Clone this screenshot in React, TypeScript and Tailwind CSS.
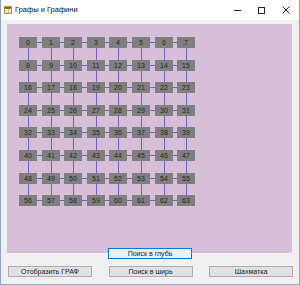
import React from "react";

const COLS = 8;
const ROWS = 8;
const STEP = 22.6;
const NODE_W = 18;
const NODE_H = 11;
const OFF_X = 12;
const OFF_Y = 13;

const pos = (i: number, off: number) => off + Math.round(STEP * i);

function Graph() {
  const nodes = [];
  for (let r = 0; r < ROWS; r++) {
    for (let c = 0; c < COLS; c++) {
      nodes.push({ id: r * COLS + c, x: pos(c, OFF_X), y: pos(r, OFF_Y) });
    }
  }

  return (
    <div className="relative h-full w-full">
      {/* edges */}
      <svg className="absolute inset-0" width="285" height="229">
        {Array.from({ length: ROWS }).map((_, r) => (
          <line
            key={"h" + r}
            x1={pos(0, OFF_X) + NODE_W / 2}
            x2={pos(COLS - 1, OFF_X) + NODE_W / 2}
            y1={pos(r, OFF_Y) + 5.5}
            y2={pos(r, OFF_Y) + 5.5}
            stroke="#7160c8"
            strokeWidth="1"
          />
        ))}
        {Array.from({ length: COLS }).map((_, c) => (
          <line
            key={"v" + c}
            x1={pos(c, OFF_X) + 9.5}
            x2={pos(c, OFF_X) + 9.5}
            y1={pos(0, OFF_Y) + NODE_H / 2}
            y2={pos(ROWS - 1, OFF_Y) + NODE_H / 2}
            stroke="#7160c8"
            strokeWidth="1"
          />
        ))}
      </svg>

      {/* nodes */}
      {nodes.map((n) => (
        <div
          key={n.id}
          className="absolute flex h-[11px] w-[18px] items-center justify-center bg-[#7f7f7f] text-[7px] leading-none text-[#262626]"
          style={{ left: n.x, top: n.y }}
        >
          {n.id}
        </div>
      ))}
    </div>
  );
}

function WinButton({ label, focused }: { label: string; focused?: boolean }) {
  return (
    <div
      className={
        focused
          ? "flex h-[11px] w-[84px] items-center justify-center border border-[#0078d7] bg-[#e5f1fb] text-[7px] leading-none text-[#222]"
          : "flex h-[11px] w-[84px] items-center justify-center border border-[#adadad] bg-[#e1e1e1] text-[7px] leading-none text-[#222]"
      }
    >
      {label}
    </div>
  );
}

export default function App() {
  return (
    <div
      className="flex h-[285px] w-[300px] flex-col border-x border-b border-[#8fa7c9] bg-[#f0f0f0]"
      style={{ fontFamily: '"Liberation Sans", Arial, sans-serif' }}
    >
      {/* Title bar */}
      <div className="flex h-[20px] items-center bg-white">
        <svg width="8" height="8" viewBox="0 0 8 8" className="ml-[3px]">
          <rect x="0" y="0" width="8" height="8" fill="#c58a2a" />
          <rect x="1" y="1" width="6" height="1.5" fill="#3a6bc0" />
          <rect x="1" y="3" width="3" height="4" fill="#fff2c0" />
          <rect x="4.5" y="3" width="2.5" height="4" fill="#e8e8e8" />
        </svg>
        <span className="ml-[3px] text-[7.5px] text-[#111]">Графы и Графини</span>
        <div className="ml-auto flex items-center">
          <div className="flex h-[20px] w-[23px] items-center justify-center">
            <div className="h-px w-[7px] bg-[#222]" />
          </div>
          <div className="flex h-[20px] w-[24px] items-center justify-center">
            <div className="h-[7px] w-[7px] border border-[#222]" />
          </div>
          <div className="flex h-[20px] w-[26px] items-center justify-center">
            <svg width="8" height="8" viewBox="0 0 8 8">
              <path d="M0.5 0.5 L7.5 7.5 M7.5 0.5 L0.5 7.5" stroke="#222" strokeWidth="1" />
            </svg>
          </div>
        </div>
      </div>

      {/* Client area */}
      <div className="flex flex-col pt-[4px]">
        <div className="ml-[6px] h-[229px] w-[285px] bg-[#d8bfd8]">
          <Graph />
        </div>

        <div className="relative z-10 -mt-[5px] flex pl-[107px]">
          <WinButton label="Поиск в глубь" focused />
        </div>

        <div className="mt-[7px] flex justify-between pl-[7px] pr-[6px]">
          <WinButton label="Отобразить ГРАФ" />
          <WinButton label="Поиск в ширь" />
          <WinButton label="Шахматка" />
        </div>
      </div>
    </div>
  );
}
